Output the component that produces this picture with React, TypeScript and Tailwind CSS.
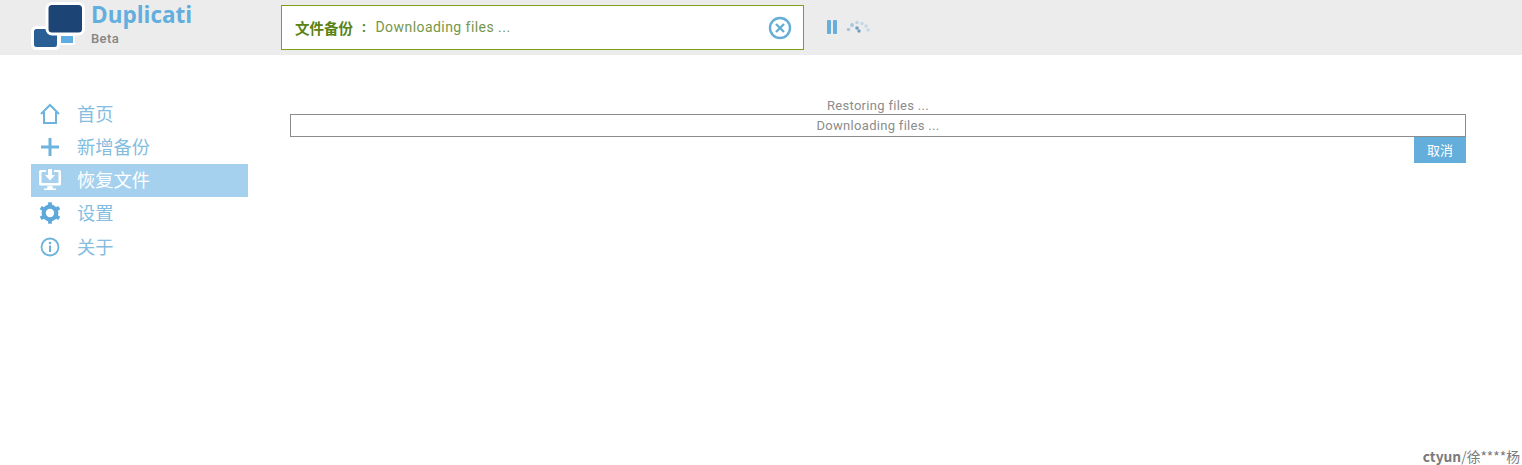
import React from "react";

const CJK = '"Noto Sans CJK SC", sans-serif';

const HomeIcon = () => (
    <svg width="22" height="22" viewBox="0 0 22 22" fill="none" stroke="#6cb3de" strokeWidth="2">
        <path d="M2 11 L11 2 L20 11 M5 9 V20 H17 V9" strokeLinejoin="miter" />
    </svg>
);

const PlusIcon = () => (
    <svg width="22" height="22" viewBox="0 0 22 22" fill="#6cb3de">
        <rect x="2" y="9.500" width="18" height="3" />
        <rect x="9.500" y="2" width="3" height="18" />
    </svg>
);

const RestoreIcon = () => (
    <svg width="24" height="24" viewBox="0 0 24 24" fill="#fff">
        <path d="M2.500 2 H8 V4 H3.500 V15 H20.500 V4 H16 V2 H21.500 A1.500 1.500 0 0 1 23 3.500 V16 A1.500 1.500 0 0 1 21.500 17.500 H2.500 A1.500 1.500 0 0 1 1 16 V3.500 A1.500 1.500 0 0 1 2.500 2 Z" />
        <path d="M10 1 H14 V7 H17 L12 12.500 L7 7 H10 Z" />
        <path d="M9.500 18 H14.500 L15 20.500 H18 V22 H6 V20.500 H9 Z" />
    </svg>
);

const GearIcon = () => (
    <svg width="22" height="22" viewBox="0 0 22 22">
        <circle cx="11" cy="11" r="6.300" fill="none" stroke="#5da9da" strokeWidth="4.200" />
        <g stroke="#5da9da" strokeWidth="3.800">
            <path d="M11 0.300 V5" />
            <path d="M11 17 V21.700" />
            <path d="M1.700 5.600 L5.800 8" />
            <path d="M16.200 14 L20.300 16.400" />
            <path d="M1.700 16.400 L5.800 14" />
            <path d="M16.200 8 L20.300 5.600" />
        </g>
    </svg>
);

const InfoIcon = () => (
    <svg width="22" height="22" viewBox="0 0 22 22" fill="none" stroke="#6cb3de">
        <circle cx="11" cy="11" r="8.500" strokeWidth="1.800" />
        <circle cx="11" cy="7" r="1.300" fill="#6cb3de" stroke="none" />
        <rect x="10" y="9.500" width="2" height="6.500" fill="#6cb3de" stroke="none" />
    </svg>
);

const menu = [
    { label: "首页", icon: <HomeIcon /> },
    { label: "新增备份", icon: <PlusIcon /> },
    { label: "恢复文件", icon: <RestoreIcon />, active: true },
    { label: "设置", icon: <GearIcon /> },
    { label: "关于", icon: <InfoIcon /> },
];

const Logo = () => (
    <svg width="56" height="50" viewBox="0 0 56 50" className="shrink-0">
        <rect x="3.500" y="27.500" width="26" height="21" rx="4" fill="#2a5f95" stroke="#fff" strokeWidth="3" />
        <rect x="31" y="35" width="14" height="9" fill="#5dade2" stroke="#fff" strokeWidth="2" />
        <rect x="18" y="3.500" width="36.500" height="30.500" rx="5" fill="#1c4474" stroke="#fff" strokeWidth="3" />
    </svg>
);

const Spinner = () => (
    <svg width="24" height="14" viewBox="0 0 24 14" fill="#a7c7de">
        <circle cx="2.500" cy="9.500" r="1.800" />
        <circle cx="6" cy="5" r="1.900" />
        <circle cx="11" cy="2.500" r="1.800" fill="#bcd3e4" />
        <circle cx="16" cy="3.500" r="1.700" fill="#c4d8e7" />
        <circle cx="20" cy="6" r="1.700" fill="#c4d8e7" />
        <circle cx="22" cy="10" r="1.700" fill="#c4d8e7" />
        <circle cx="11" cy="8" r="1.800" fill="#6fa0c4" />
        <circle cx="13" cy="11" r="1.700" fill="#6fa0c4" />
    </svg>
);

export default function App() {
    return (
        <div className="relative h-[465px] w-[1522px] overflow-hidden bg-white font-['Roboto',sans-serif]">
            {/* Header */}
            <div className="flex h-[55px] items-start bg-[#ececec]">
                <div className="ml-[29px] flex w-[252px] shrink-0">
                    <Logo />
                    <div className="ml-[6px]">
                        <div className="font-['Open_Sans',sans-serif] text-[22.500px] leading-[30px] font-bold text-[#62aede]">Duplicati</div>
                        <div className="mt-[1px] text-[13px] leading-[15px] font-medium tracking-[0.4px] text-[#858585]">Beta</div>
                    </div>
                </div>
                <div className="mt-[5px] h-[45px] w-[523px] bg-[#7f9f1a] p-px">
                    <div className="flex h-full items-center bg-white pr-[11px] pl-[13px] text-[14px] tracking-[0.45px] text-[#76964a]">
                        <span className="text-[14.500px] tracking-normal font-bold text-[#5a8215]" style={{ fontFamily: CJK }}>文件备份</span>
                        <span className="mr-[9px] ml-[9px] font-bold text-[#5a8215]">:</span>
                        <span>Downloading files ...</span>
                        <svg width="24" height="24" viewBox="0 0 24 24" fill="none" stroke="#64aed8" strokeWidth="2.400" className="ml-auto">
                            <circle cx="12" cy="12" r="10" />
                            <path d="M8 8 L16 16 M16 8 L8 16" />
                        </svg>
                    </div>
                </div>
                <div className="mt-[20px] ml-[23px] flex items-center gap-[9px]">
                    <div className="flex gap-[2px]">
                        <div className="h-[14px] w-[4px] rounded-[1px] bg-[#68aedb]" />
                        <div className="h-[14px] w-[4px] rounded-[1px] bg-[#68aedb]" />
                    </div>
                    <Spinner />
                </div>
            </div>

            <div className="flex">
                {/* Sidebar */}
                <div className="mt-[42px] ml-[31px] w-[217px] shrink-0">
                    {menu.map((item) => (
                        <div
                            key={item.label}
                            className={`flex h-[33.250px] items-center pl-[7px] text-[18.250px] leading-[30px] ${item.active ? "bg-[#a5d1ee] text-white" : "text-[#84bde0]"}`}
                            style={{ fontFamily: CJK }}
                        >
                            <span className="flex w-[24px] justify-center">{item.icon}</span>
                            <span className="ml-[15px] -translate-y-px">{item.label}</span>
                        </div>
                    ))}
                </div>

                {/* Restore progress */}
                <div className="mt-[43px] ml-[42px] w-[1176px] text-center text-[13px] tracking-[0.3px] text-[#8c8c8c]">
                    <div className="h-[16px] leading-[16px]">Restoring files ...</div>
                    <div className="h-[23px] border border-[#8c8c8c] leading-[22px]">Downloading files ...</div>
                    <div className="flex justify-end">
                        <button className="h-[26px] w-[52px] bg-[#64aedc] text-[13px] tracking-normal text-white" style={{ fontFamily: CJK }}>取消</button>
                    </div>
                </div>
            </div>

            {/* Watermark */}
            <div className="absolute right-[2px] bottom-[-1px] text-[13.800px] leading-[20px] text-[#7a7a7a]" style={{ fontFamily: CJK }}>
                <span className="font-bold">ctyun</span>/徐****杨
            </div>
        </div>
    );
}
